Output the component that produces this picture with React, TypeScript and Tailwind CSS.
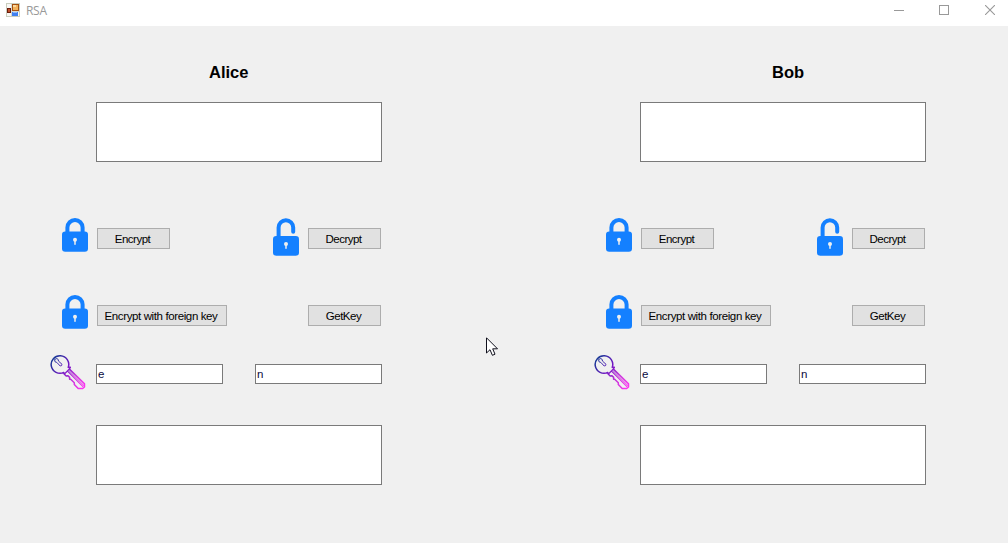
import { useId } from "react";

function AppIcon() {
  return (
    <svg width="14" height="14" viewBox="0 0 14 14" className="block">
      <rect x="0.5" y="0.5" width="13" height="13" fill="#f8f8f4" stroke="#c9cdbf" />
      <path d="M1 9.5h5M5.5 1v12M6 8.5h7" stroke="#d5d8d2" fill="none" />
      <rect x="6.5" y="1.5" width="6" height="6" fill="#f2b25c" stroke="#a5500f" />
      <rect x="7" y="2" width="3" height="2" fill="#fbd9a0" />
      <rect x="1.5" y="5.5" width="3" height="4" fill="#c0502a" stroke="#6b1c0c" />
      <rect x="6" y="9" width="6" height="4" fill="#3f7ff0" />
      <rect x="7" y="9" width="4" height="1" fill="#8db8fb" />
    </svg>
  );
}

function LockIcon() {
  return (
    <svg width="26" height="34" viewBox="0 0 26 34" className="block">
      <path d="M5.4 15V9.6a7.6 7.6 0 0 1 15.2 0V15" fill="none" stroke="#1480ff" strokeWidth="4" />
      <rect x="0" y="13.4" width="26" height="20.3" rx="3.2" fill="#1480ff" />
      <circle cx="13" cy="21.8" r="2" fill="#efefef" />
      <path d="M13 22v4.2" stroke="#efefef" strokeWidth="1.5" strokeLinecap="round" />
    </svg>
  );
}

function UnlockIcon() {
  return (
    <svg width="26" height="38" viewBox="0 0 26 38" className="block">
      <path d="M5.6 20V9.5a7.3 7.3 0 0 1 14.6 0v4.3" fill="none" stroke="#1480ff" strokeWidth="4" strokeLinecap="round" />
      <rect x="0" y="18" width="26" height="19.8" rx="3.2" fill="#1480ff" />
      <circle cx="13" cy="26" r="2" fill="#efefef" />
      <path d="M13 26v4.3" stroke="#efefef" strokeWidth="1.5" strokeLinecap="round" />
    </svg>
  );
}

function KeyIcon() {
  const id = useId();
  return (
    <svg width="36" height="36" viewBox="0 0 36 36" className="block">
      <defs>
        <linearGradient id={id} gradientUnits="userSpaceOnUse" x1="1" y1="6" x2="34" y2="32">
          <stop offset="0" stopColor="#143a94" />
          <stop offset="0.4" stopColor="#7418c4" />
          <stop offset="0.7" stopColor="#c735da" />
          <stop offset="1" stopColor="#fb33f0" />
        </linearGradient>
      </defs>
      <g fill="none" stroke={`url(#${id})`} strokeWidth="1.5" strokeLinejoin="round" strokeLinecap="round">
        <path d="M13.8 18.4A8.8 8.8 0 1 1 18.3 13.3L20.3 13.3L19.4 15L34.5 29.8V33L32.7 34.5H28.2L24.3 30.4V28.7L20.7 25.2H19.6V23.4L18 21.8L16.2 22L14.4 20.3Z" />
        <path d="M19.4 15L14.4 20M17.5 17.1L32.9 32.6" strokeWidth="1.2" />
        <path d="M18.8 17.1L33.8 31.8M19.1 15.8L34 30.6" strokeWidth="0.7" />
        <path d="M4.9 5.4L6.8 4.5L8.3 5.6L8.4 7L12 10.3L11.6 11.6L10.2 12L6.8 8.4L5.5 8Z" strokeWidth="1" />
      </g>
    </svg>
  );
}

function FormButton({ label, wide }: { label: string; wide?: boolean }) {
  return (
    <button
      className={`${wide ? "w-[130px] tracking-[-0.38px]" : "w-[73px] tracking-[-0.5px]"} h-[21px] shrink-0 border border-[#adadad] bg-[#e1e1e1] pt-px pr-[2px] text-[11.5px] leading-[18px] whitespace-nowrap text-black`}
    >
      {label}
    </button>
  );
}

function FormInput({ value }: { value: string }) {
  return (
    <input
      defaultValue={value}
      className="block h-5 w-[127px] border border-[#7a7a7a] bg-white px-px text-[11.5px] leading-[18px] text-[#0a0a40] outline-none"
    />
  );
}

function PartyPanel({ name, titleInset }: { name: string; titleInset: string }) {
  return (
    <section className="flex w-[332px] flex-col">
      <h2 className={`${titleInset} mt-9 h-5 text-[16.5px] leading-5 font-bold text-black`}>
        {name}
      </h2>
      <textarea className="mt-5 ml-[46px] block h-[60px] w-[286px] resize-none border border-[#7a7a7a] bg-white outline-none" />
      <div className="mt-14 flex h-[38px] items-start pl-3">
        <LockIcon />
        <div className="mt-2.5 ml-[9px] flex">
          <FormButton label="Encrypt" />
        </div>
        <div className="ml-[103px]">
          <UnlockIcon />
        </div>
        <div className="mt-2.5 ml-[9px] flex">
          <FormButton label="Decrypt" />
        </div>
      </div>
      <div className="mt-[39px] flex h-[34px] items-start pl-3">
        <LockIcon />
        <div className="mt-2.5 ml-[9px] flex gap-[81px]">
          <FormButton label="Encrypt with foreign key" wide />
          <FormButton label="GetKey" />
        </div>
      </div>
      <div className="mt-[25px] flex h-9 items-start">
        <KeyIcon />
        <div className="mt-2.5 ml-2.5 flex gap-8">
          <FormInput value="e" />
          <FormInput value="n" />
        </div>
      </div>
      <textarea className="mt-[35px] ml-[46px] block h-[60px] w-[286px] resize-none border border-[#7a7a7a] bg-white outline-none" />
    </section>
  );
}

export default function App() {
  return (
    <div className="relative flex h-[543px] w-[1008px] flex-col overflow-hidden bg-[#f0f0f0] font-['Liberation_Sans',Arial,sans-serif]">
      <header className="flex h-[26px] shrink-0 items-start bg-white pl-1.5">
        <div className="mt-[3px]">
          <AppIcon />
        </div>
        <span className="mt-[3px] ml-1.5 font-['Open_Sans','Noto_Sans',sans-serif] text-[12px] leading-4 tracking-[-0.3px] text-[#999999]">
          RSA
        </span>
        <div className="mt-[5px] mr-[13px] ml-auto flex text-[#999999]">
          <svg width="10" height="10" viewBox="0 0 10 10">
            <path d="M0 5.5h10" stroke="currentColor" />
          </svg>
          <svg width="10" height="10" viewBox="0 0 10 10" className="ml-[35px]">
            <rect x="0.5" y="0.5" width="9" height="9" fill="none" stroke="currentColor" />
          </svg>
          <svg width="10" height="10" viewBox="0 0 10 10" className="ml-9">
            <path d="M0 0l10 10M10 0L0 10" stroke="currentColor" strokeWidth="1.1" />
          </svg>
        </div>
      </header>
      <main className="flex gap-[212px] pl-[50px]">
        <PartyPanel name="Alice" titleInset="pl-[159px]" />
        <PartyPanel name="Bob" titleInset="pl-[178px]" />
      </main>
      <svg width="13" height="20" viewBox="0 0 13 20" className="absolute top-[337px] left-[486px]">
        <path d="M0.5 0.8V16L4 12.7L6.4 18.3L9 17.2L6.7 11.8H11.5Z" fill="#fff" stroke="#10101c" />
      </svg>
    </div>
  );
}
